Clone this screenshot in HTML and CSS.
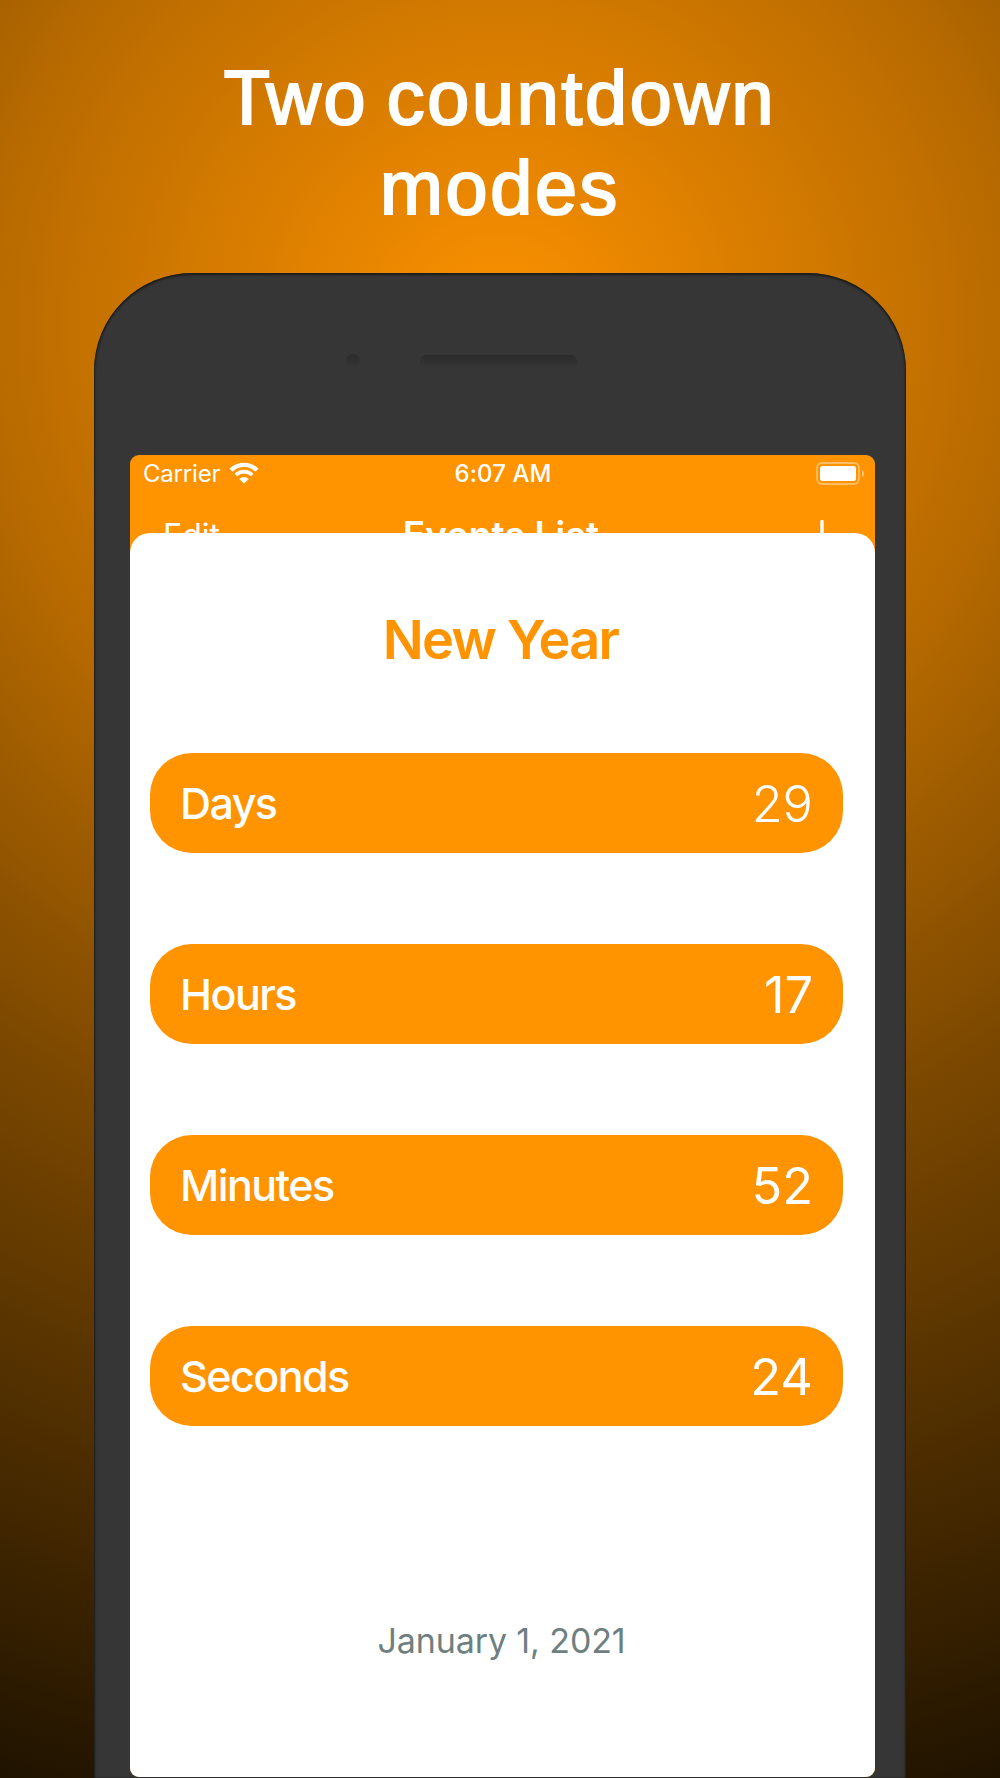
FILE: index.html
```html
<!DOCTYPE html>
<html lang="en">
  <head>
    <meta charset="UTF-8" />
    <meta name="viewport" content="width=device-width, initial-scale=1.0" />
    <title>Two countdown modes</title>
    <link rel="stylesheet" href="styles.css">
  </head>
  <body>
    <h1 class="headline"><span class="kern">T</span>wo countdown<br />modes</h1>
    <div class="phone">
      <div class="phone-top">
        <span class="camera"></span>
        <span class="speaker"></span>
      </div>
      <div class="screen">
        <div class="status-bar">
          <div class="status-left">
            <span class="carrier">Carrier</span>
            <svg class="wifi" width="30" height="22" viewBox="0 0 30 22">
              <path d="M2 8.2 A18.5 18.5 0 0 1 28 8.2" fill="none" stroke="#fff" stroke-width="4.2" />
              <path d="M6.8 13 A11.7 11.7 0 0 1 23.2 13" fill="none" stroke="#fff" stroke-width="3.6" />
              <path d="M15 21.6 L10.2 16.9 A7 7 0 0 1 19.8 16.9 Z" fill="#fff" />
            </svg>
          </div>
          <span class="time">6:07 AM</span>
          <div class="status-right">
            <svg class="battery" width="49" height="23" viewBox="0 0 49 23">
              <rect x="1" y="1" width="42" height="21" rx="5" fill="none" stroke="#fff" stroke-opacity="0.4" stroke-width="1.8" />
              <rect x="4" y="4" width="36" height="15" rx="2.5" fill="#fff" />
              <path d="M46 8 Q48 9 48 11.5 Q48 14 46 15 Z" fill="#fff" fill-opacity="0.5" />
            </svg>
          </div>
        </div>
        <div class="nav-bar">
          <span class="edit">Edit</span>
          <span class="nav-title">Events List</span>
          <svg class="plus" width="34" height="34" viewBox="0 0 34 34">
            <path d="M17 1.5 V32.5 M1.5 17 H32.5" fill="none" stroke="#fff" stroke-width="3.4" stroke-linecap="round" />
          </svg>
        </div>
        <div class="sheet">
          <h2 class="event-name">New Year</h2>
          <div class="counters">
            <div class="counter">
              <span class="label">Days</span>
              <span class="value light">29</span>
            </div>
            <div class="counter">
              <span class="label">Hours</span>
              <span class="value">17</span>
            </div>
            <div class="counter">
              <span class="label">Minutes</span>
              <span class="value">52</span>
            </div>
            <div class="counter">
              <span class="label">Seconds</span>
              <span class="value">24</span>
            </div>
          </div>
          <p class="event-date">January 1, 2021</p>
        </div>
      </div>
    </div>
  </body>
</html>
```
FILE: styles.css
```css
* {
  box-sizing: border-box;
}
body {
  margin: 0;
  height: 1778px;
  overflow: hidden;
  display: flex;
  flex-direction: column;
  align-items: center;
  font-family: Inter, "Liberation Sans", sans-serif;
  background: radial-gradient(circle 1700px at 500px 325px, #fc9100 0%, #b96b00 29.5%, #a56000 36%, #7a4700 51.5%, #1e1200 91%, #0c0700 100%);
}
.headline {
  margin: 0;
  padding-top: 52.5px;
  height: 273px;
  flex-shrink: 0;
  font-family: "Liberation Sans", Arial, sans-serif;
  font-size: 75.5px;
  font-weight: normal;
  line-height: 90px;
  letter-spacing: 2.7px;
  word-spacing: -5px;
  text-align: center;
  color: white;
  -webkit-text-stroke: 2.2px white;
}
.kern {
  letter-spacing: -3.6px;
}
.phone {
  width: 812px;
  height: 1505px;
  flex-shrink: 0;
  padding: 0 31px 0 36px;
  border-radius: 98px 98px 0 0;
  background-color: #363636;
  box-shadow: inset 0 1px 2px 1px #1c1c1c;
}
.phone-top {
  height: 181.5px;
  padding: 80.5px 0 0 216px;
  display: flex;
  gap: 60px;
}
.camera {
  width: 14px;
  height: 14px;
  border-radius: 50%;
  background: linear-gradient(#2b2b2b, #363636);
}
.speaker {
  width: 157px;
  height: 14px;
  margin-top: 1px;
  border-radius: 6px;
  background: linear-gradient(#2b2b2b, #363636);
}
.screen {
  height: 1322.5px;
  border-radius: 9px;
  overflow: hidden;
  background-color: #ff9300;
  color: white;
}
.status-bar {
  height: 37.5px;
  padding: 0 10px 0 13px;
  display: grid;
  grid-template-columns: 1fr auto 1fr;
  align-items: center;
  font-size: 24px;
  letter-spacing: -0.2px;
}
.status-left {
  display: flex;
  align-items: center;
  gap: 9px;
}
.status-right {
  display: flex;
  justify-content: flex-end;
}
.time {
  margin-right: 2px;
  font-weight: 500;
  letter-spacing: 0.1px;
}
.nav-bar {
  height: 40.5px;
  padding: 0 36px 0 33px;
  display: grid;
  grid-template-columns: 1fr auto 1fr;
  align-items: start;
}
.edit {
  padding-top: 26px;
  font-size: 32px;
  line-height: 36px;
}
.nav-title {
  padding-top: 24.5px;
  font-size: 37px;
  font-weight: 600;
  line-height: 36px;
  letter-spacing: 0.2px;
}
.plus {
  margin-top: 28px;
  justify-self: end;
}
.sheet {
  position: relative;
  height: 1244.5px;
  padding: 72px 32px 0 20px;
  border-radius: 20px 20px 0 0;
  background-color: white;
}
.event-name {
  margin: 0 -8px 0 0;
  font-size: 54px;
  font-weight: 600;
  line-height: 70px;
  letter-spacing: -1.7px;
  text-align: center;
  color: #ff9300;
}
.counters {
  padding-top: 78.5px;
  display: flex;
  flex-direction: column;
  gap: 91.5px;
}
.counter {
  height: 99.5px;
  padding: 0 30px 0 30px;
  display: flex;
  justify-content: space-between;
  align-items: center;
  border-radius: 42px;
  background-color: #ff9300;
}
.label {
  font-size: 43px;
  font-weight: 500;
  letter-spacing: -1.55px;
}
.value {
  padding-top: 1px;
  font-size: 50.5px;
}
.light {
  font-weight: 300;
}
.event-date {
  margin: 194px -10px 0 0;
  font-size: 34px;
  line-height: 42px;
  letter-spacing: -0.1px;
  text-align: center;
  color: #6f7f80;
}
```
